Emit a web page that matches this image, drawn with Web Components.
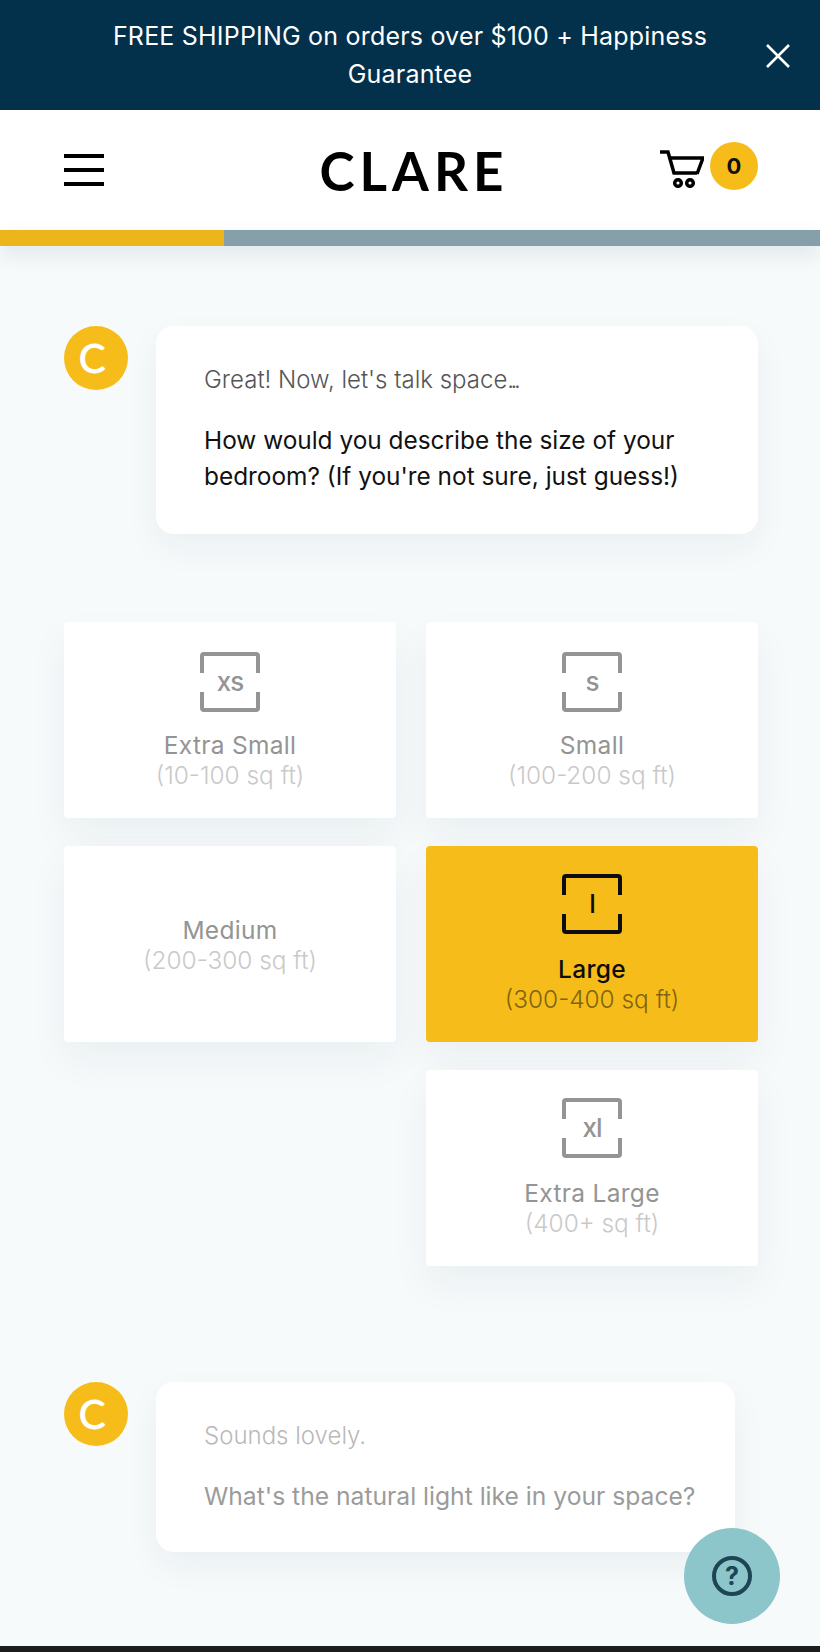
<!DOCTYPE html>
<html lang="en">
<head>
<meta charset="utf-8">
<title>Clare</title>
<style>
    html, body { margin: 0; padding: 0; background: #f6fafb; }
    body { font-family: Inter, "Liberation Sans", sans-serif; }
    .tight { letter-spacing: -3.5px; }
</style>
</head>
<body>
<clare-page>
    <promo-banner>FREE SHIPPING on orders over $100 + Happiness Guarantee</promo-banner>
    <site-header count="0"></site-header>
    <quiz-progress value="224"></quiz-progress>
    <quiz-main>
        <chat-message>
            <span slot="intro">Great! Now, let's talk space<span class="tight">...</span></span>
            How would you describe the size of your bedroom? (If you're not sure, just guess!)
        </chat-message>
        <size-grid>
            <size-option label="Extra Small" range="(10-100 sq ft)" mark="xs"></size-option>
            <size-option label="Small" range="(100-200 sq ft)" mark="s"></size-option>
            <size-option label="Medium" range="(200-300 sq ft)"></size-option>
            <size-option label="Large" range="(300-400 sq ft)" mark="l" selected></size-option>
            <size-option label="Extra Large" range="(400+ sq ft)" mark="xl" col="2"></size-option>
        </size-grid>
        <chat-message faded>
            <span slot="intro">Sounds lovely.</span>
            What's the natural light like in your space?
        </chat-message>
    </quiz-main>
    <help-button></help-button>
</clare-page>

<script>
class ClarePage extends HTMLElement {
    constructor() {
        super();
        this.attachShadow({ mode: 'open' });
        this.shadowRoot.innerHTML = `
        <style>
            :host {
                display: flex;
                flex-direction: column;
                position: relative;
                height: 1652px;
                overflow: hidden;
                background: #f6fafb;
                border-bottom: 6px solid #1c1c1c;
                box-sizing: border-box;
            }
        </style>
        <slot></slot>`;
    }
}

class PromoBanner extends HTMLElement {
    constructor() {
        super();
        this.attachShadow({ mode: 'open' });
        this.shadowRoot.innerHTML = `
        <style>
            :host {
                display: flex;
                align-items: center;
                height: 110px;
                flex: none;
                background: #03304a;
                color: #fff;
                font-size: 25px;
                letter-spacing: .2px;
                line-height: 38px;
            }
            .text { flex: 1; padding: 0 100px; text-align: center; }
            .close { position: absolute; right: 30px; top: 44px; width: 24px; height: 24px; }
        </style>
        <div class="text"><slot></slot></div>
        <svg class="close" viewBox="0 0 24 24" fill="none" stroke="#fff" stroke-width="2.6">
            <path d="M1 1 23 23M23 1 1 23"/>
        </svg>`;
    }
}

class SiteHeader extends HTMLElement {
    constructor() {
        super();
        this.attachShadow({ mode: 'open' });
        this.shadowRoot.innerHTML = `
        <style>
            :host {
                display: grid;
                grid-template-columns: 1fr auto 1fr;
                align-items: center;
                flex: none;
                height: 120px;
                padding: 0 62px 0 64px;
                background: #fff;
            }
            .burger { display: flex; flex-direction: column; gap: 10px; width: 40px; }
            .burger i { display: block; height: 4px; background: #000; }
            .logo {
                font: 700 53px/1 Lato, sans-serif;
                letter-spacing: 5px;
                margin-left: 6px;
                color: #000;
            }
            .cart { display: flex; align-items: center; gap: 6px; justify-self: end; margin-bottom: 8px; }
            .cart svg { margin-top: 6px; }
            .badge {
                width: 48px; height: 48px; border-radius: 50%;
                background: #f6bd1a; color: #111;
                display: flex; align-items: center; justify-content: center;
                font-size: 22px; font-weight: 700;
            }
        </style>
        <div class="burger"><i></i><i></i><i></i></div>
        <div class="logo">CLARE</div>
        <div class="cart">
            <svg width="44" height="38" viewBox="0 0 44 38" fill="none" stroke="#000" stroke-width="3.500">
                <path d="M0 2h8l6 21h23"/>
                <path d="M10 8h33l-6 16"/>
                <circle cx="18" cy="33" r="3.300"/>
                <circle cx="30" cy="33" r="3.300"/>
            </svg>
            <div class="badge">${this.getAttribute('count') || '0'}</div>
        </div>`;
    }
}

class QuizProgress extends HTMLElement {
    constructor() {
        super();
        this.attachShadow({ mode: 'open' });
        this.shadowRoot.innerHTML = `
        <style>
            :host {
                display: block;
                flex: none;
                height: 16px;
                background: #86a0aa;
                box-shadow: 0 8px 20px rgba(0, 40, 60, .1);
            }
            .fill { height: 100%; background: #edb51c; width: ${this.getAttribute('value')}px; }
        </style>
        <div class="fill"></div>`;
    }
}

class QuizMain extends HTMLElement {
    constructor() {
        super();
        this.attachShadow({ mode: 'open' });
        this.shadowRoot.innerHTML = `
        <style>
            :host {
                display: flex;
                flex-direction: column;
                flex: 1;
                padding: 80px 62px 0 64px;
            }
        </style>
        <slot></slot>`;
    }
}

class ChatMessage extends HTMLElement {
    constructor() {
        super();
        this.attachShadow({ mode: 'open' });
        this.shadowRoot.innerHTML = `
        <style>
            :host { display: flex; align-items: flex-start; gap: 28px; flex: none; }
            .avatar {
                flex: none;
                width: 64px; height: 64px; border-radius: 50%;
                background: #f6bd1a; color: #fff;
                display: flex; align-items: center; justify-content: center;
                font: 400 40px/1 Lato, sans-serif;
                -webkit-text-stroke: .8px #fff;
            }
            .avatar span { margin-right: 8px; }
            .card {
                background: #fff;
                border-radius: 18px;
                padding: 36px 40px 40px 48px;
                font-size: 24.400px;
                line-height: 36px;
                color: #111;
                box-shadow: 0 14px 34px rgba(0, 40, 60, .05);
            }
            .intro { display: block; margin-bottom: 24px; color: #555; font-weight: 300; font-size: 24px; }
            :host([faded]) .card { color: #9b9b9b; padding-bottom: 38px; font-size: 24.650px; }
            :host([faded]) .intro { color: #b9b9b9; font-size: 24px; }
        </style>
        <div class="avatar"><span>C</span></div>
        <div class="card">
            <span class="intro"><slot name="intro"></slot></span>
            <slot></slot>
        </div>`;
    }
}

class SizeGrid extends HTMLElement {
    constructor() {
        super();
        this.attachShadow({ mode: 'open' });
        this.shadowRoot.innerHTML = `
        <style>
            :host {
                display: grid;
                grid-template-columns: 332px 332px;
                grid-auto-rows: 196px;
                gap: 28px 30px;
                flex: none;
                margin: 88px 0 116px;
            }
        </style>
        <slot></slot>`;
    }
}

class SizeOption extends HTMLElement {
    constructor() {
        super();
        this.attachShadow({ mode: 'open' });
        const mark = this.getAttribute('mark');
        const icon = mark ? `
            <div class="icon">
                <svg width="60" height="60" viewBox="0 0 60 60" fill="none" stroke="currentColor" stroke-width="4">
                    <path d="M2 21V4a2 2 0 0 1 2-2h52a2 2 0 0 1 2 2v17"/>
                    <path d="M2 40v16a2 2 0 0 0 2 2h52a2 2 0 0 0 2-2V40"/>
                </svg>
                <span class="mark">${mark}</span>
            </div>` : '';
        this.shadowRoot.innerHTML = `
        <style>
            :host {
                display: flex;
                flex-direction: column;
                align-items: center;
                justify-content: center;
                box-sizing: border-box;
                padding-top: 2px;
                background: #fff;
                border-radius: 4px;
                color: #949494;
                box-shadow: 0 18px 40px rgba(0, 40, 60, .05);
            }
            :host([col="2"]) { grid-column: 2; }
            :host([selected]) { background: #f6bd1a; color: #0d0d0d; }
            .icon {
                position: relative;
                width: 60px; height: 60px;
                display: flex; align-items: center; justify-content: center;
                margin-bottom: 18px;
            }
            :host([mark="l"]) .icon, :host([mark="xl"]) .icon { margin-top: -2px; margin-bottom: 20px; }
            svg { position: absolute; left: 0; top: 0; }
            .mark { font-size: 26px; font-weight: 500; line-height: 1; letter-spacing: -1px; }
            .label { font-size: 24.500px; letter-spacing: .3px; line-height: 30px; }
            :host([selected]) .label { font-weight: 500; }
            .range { font-size: 24.400px; line-height: 30px; font-weight: 300; color: #c9c9c9; }
            :host([selected]) .range { color: #80640f; }
        </style>
        ${icon}
        <div class="label">${this.getAttribute('label')}</div>
        <div class="range">${this.getAttribute('range')}</div>`;
    }
}

class HelpButton extends HTMLElement {
    constructor() {
        super();
        this.attachShadow({ mode: 'open' });
        this.shadowRoot.innerHTML = `
        <style>
            :host {
                position: absolute;
                left: 684px;
                top: 1528px;
                width: 96px; height: 96px;
                border-radius: 50%;
                background: #8cc5ca;
                display: flex; align-items: center; justify-content: center;
            }
            .ring {
                width: 40px; height: 40px; box-sizing: border-box;
                border: 4px solid #1d4554; border-radius: 50%;
                color: #1d4554;
                display: flex; align-items: center; justify-content: center;
                font-size: 25px; font-weight: 700; line-height: 1;
            }
        </style>
        <div class="ring">?</div>`;
    }
}

customElements.define('clare-page', ClarePage);
customElements.define('promo-banner', PromoBanner);
customElements.define('site-header', SiteHeader);
customElements.define('quiz-progress', QuizProgress);
customElements.define('quiz-main', QuizMain);
customElements.define('chat-message', ChatMessage);
customElements.define('size-grid', SizeGrid);
customElements.define('size-option', SizeOption);
customElements.define('help-button', HelpButton);
</script>
</body>
</html>
